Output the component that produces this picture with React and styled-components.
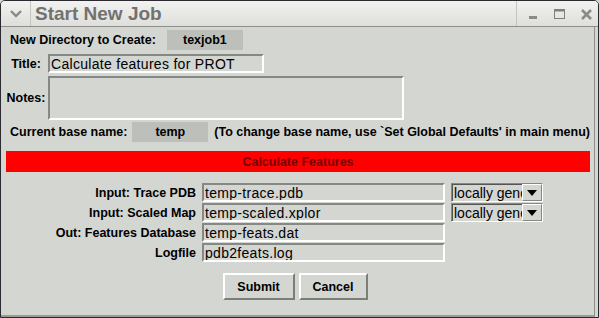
import React from 'react';
import styled, { createGlobalStyle } from 'styled-components';

const Global = createGlobalStyle`
  html, body { margin: 0; padding: 0; background: #d4d6d2; }
  body { font-family: "Liberation Sans", Arial, sans-serif; }
`;

const Window = styled.div`
  width: 599px;
  height: 318px;
  box-sizing: border-box;
  display: flex;
  flex-direction: column;
  background: #d4d6d2;
  border: 1px solid #2a2a30;
  border-radius: 5px 5px 0 0;
  overflow: hidden;
`;

const TitleBar = styled.div`
  height: 25px;
  display: flex;
  align-items: stretch;
  background: linear-gradient(#f2f2f0, #dedfdb);
  border-bottom: 1px solid #8e8f8b;
`;

const MenuBtn = styled.div`
  width: 29px;
  display: flex;
  align-items: center;
  justify-content: center;
  border-right: 1px solid #c4c5c1;
`;

const TitleText = styled.div`
  flex: 1;
  padding-left: 4px;
  font-size: 19px;
  font-weight: bold;
  color: #717270;
  line-height: 26px;
`;

const Controls = styled.div`
  display: flex;
  align-items: center;
  border-left: 1px solid #c4c5c1;
  padding: 0 3px 0 8px;
  gap: 11px;
`;

const Body = styled.div`
  flex: 1;
  display: flex;
  flex-direction: column;
  padding: 3px 4px 0 3px;
  border-right: 1px solid #8e8f8b;
  border-bottom: 2px solid #9a9b97;
  margin-right: 3px;
`;

const Row = styled.div`
  display: flex;
  align-items: center;
  margin-top: ${p => p.$mt || 0}px;
  padding-left: ${p => p.$pl || 0}px;
`;

const Label = styled.span`
  font-size: 12.5px;
  font-weight: bold;
  color: #000;
  white-space: nowrap;
  margin-left: ${p => p.$ml || 0}px;
`;

const SideLabel = styled(Label)`
  width: 44px;
  text-align: center;
`;

const ValueBox = styled.div`
  width: ${p => p.$w}px;
  height: 20px;
  background: #bdbfbb;
  font-size: 12.5px;
  font-weight: bold;
  display: flex;
  align-items: center;
  justify-content: center;
  margin-left: ${p => p.$ml}px;
`;

const Entry = styled.div`
  box-sizing: border-box;
  width: ${p => p.$w}px;
  height: ${p => p.$h || 19}px;
  border: 2px solid;
  border-color: #868884 #ffffff #ffffff #868884;
  font-size: 14px;
  letter-spacing: 0.3px;
  padding-left: 1px;
  display: flex;
  align-items: ${p => (p.$top ? 'flex-start' : 'center')};
  white-space: nowrap;
  overflow: hidden;
  color: #000;
`;

const Banner = styled.div`
  margin: 9px 0 0 2px;
  height: 21px;
  background: #ff0000;
  color: #7a0000;
  font-size: 12.5px;
  font-weight: bold;
  display: flex;
  align-items: center;
  justify-content: center;
`;

const Form = styled.div`
  margin-top: 11px;
  display: grid;
  grid-template-columns: 192px 243px 92px;
  column-gap: 6px;
  row-gap: 1px;
  align-items: center;
`;

const FormLabel = styled(Label)`
  text-align: right;
`;

const Select = styled.div`
  box-sizing: border-box;
  height: 19px;
  display: flex;
  border: 1px solid;
  border-color: #868884 #ffffff #ffffff #868884;
  font-size: 14px;
`;

const SelectText = styled.div`
  flex: 1;
  overflow: hidden;
  white-space: nowrap;
  padding-left: 1px;
  line-height: 17px;
  border-left: 1px solid #555;
  border-top: 1px solid #555;
`;

const SelectArrow = styled.div`
  width: 18px;
  display: flex;
  align-items: center;
  justify-content: center;
  border: 1px solid;
  border-color: #ffffff #868884 #868884 #ffffff;
`;

const Buttons = styled.div`
  margin-top: 11px;
  display: flex;
  justify-content: center;
  gap: 4px;
  padding-right: 4px;
`;

const Button = styled.button`
  box-sizing: border-box;
  width: ${p => p.$w}px;
  height: 27px;
  background: #d4d6d2;
  border: 2px solid;
  border-color: #ffffff #7c7e7a #7c7e7a #ffffff;
  font-family: "Liberation Sans", Arial, sans-serif;
  font-size: 12.5px;
  font-weight: bold;
  color: #000;
  padding: 0;
`;

const Arrow = () => (
  <svg width="10" height="6" viewBox="0 0 10 6">
    <path d="M0 0 H10 L5 6 Z" fill="#000" />
  </svg>
);

const rows = [
  { label: 'Input: Trace PDB', value: 'temp-trace.pdb', select: true },
  { label: 'Input: Scaled Map', value: 'temp-scaled.xplor', select: true },
  { label: 'Out: Features Database', value: 'temp-feats.dat' },
  { label: 'Logfile', value: 'pdb2feats.log' },
];

export default function App() {
  return (
    <Window>
      <Global />
      <TitleBar>
        <MenuBtn>
          <svg width="12" height="8" viewBox="0 0 12 8">
            <path d="M1 1 L6 6 L11 1" stroke="#8a8b88" strokeWidth="2.4" fill="none" />
          </svg>
        </MenuBtn>
        <TitleText>Start New Job</TitleText>
        <Controls>
          <svg width="16" height="16" viewBox="0 0 16 16">
            <rect x="4" y="10" width="8" height="3" fill="#8a8b88" />
          </svg>
          <svg width="16" height="16" viewBox="0 0 16 16">
            <rect x="2.5" y="3.5" width="10" height="9" stroke="#7f807d" fill="none" />
            <rect x="2.5" y="3" width="10" height="2.5" fill="#7f807d" />
          </svg>
          <svg width="16" height="16" viewBox="0 0 16 16">
            <path d="M3 4 L12 13 M12 4 L3 13" stroke="#8a8b88" strokeWidth="2.6" />
          </svg>
        </Controls>
      </TitleBar>
      <Body>
        <Row $pl={6}>
          <Label>New Directory to Create:</Label>
          <ValueBox $w={76} $ml={11}>texjob1</ValueBox>
        </Row>
        <Row $mt={4}>
          <SideLabel>Title:</SideLabel>
          <Entry $w={216}>Calculate features for PROT</Entry>
        </Row>
        <Row $mt={3}>
          <SideLabel>Notes:</SideLabel>
          <Entry $w={356} $h={44} $top />
        </Row>
        <Row $mt={2} $pl={6}>
          <Label>Current base name:</Label>
          <ValueBox $w={76} $ml={5}>temp</ValueBox>
          <Label $ml={6}>
            (To change base name, use `Set Global Defaults' in main menu)
          </Label>
        </Row>
        <Banner>Calculate Features</Banner>
        <Form>
          {rows.map(r => (
            <React.Fragment key={r.label}>
              <FormLabel>{r.label}</FormLabel>
              <Entry $w={243}>{r.value}</Entry>
              {r.select ? (
                <Select>
                  <SelectText>locally generated</SelectText>
                  <SelectArrow><Arrow /></SelectArrow>
                </Select>
              ) : (
                <div />
              )}
            </React.Fragment>
          ))}
        </Form>
        <Buttons>
          <Button $w={72}>Submit</Button>
          <Button $w={69}>Cancel</Button>
        </Buttons>
      </Body>
    </Window>
  );
}
